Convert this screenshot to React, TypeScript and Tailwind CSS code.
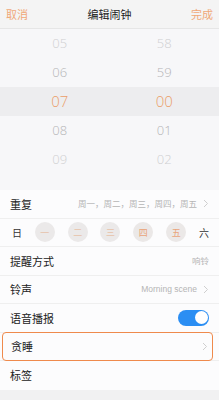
import React from 'react';

const font = { fontFamily: '"Noto Sans CJK SC", "Noto Sans", sans-serif' };
const numFont = { fontFamily: '"Open Sans", "Noto Sans", sans-serif' };

const hours = ['05', '06', '07', '08', '09'];
const minutes = ['58', '59', '00', '01', '02'];

const Chevron = () => (
  <svg width="6" height="9" viewBox="0 0 6 9" className="ml-[6px] shrink-0">
    <path d="M1 1 L4.5 4.5 L1 8" fill="none" stroke="#cfcfcf" strokeWidth="1" />
  </svg>
);

const numColor = (i: number) =>
  i === 2
    ? 'text-[#eb9d68] text-[15px]'
    : i === 1 || i === 3
      ? 'text-[#b4b4b6] text-[13px]'
      : 'text-[#cfcfd1] text-[13px]';

const Row = ({ label, children, border = true }: { label: string; children?: React.ReactNode; border?: boolean }) => (
  <div className={`h-[28.5px] flex items-center px-[10px] ${border ? 'border-b border-[#efefef]' : ''}`}>
    <span className="text-[11px] text-[#222]">{label}</span>
    <div className="ml-auto flex items-center">{children}</div>
  </div>
);

export default function App() {
  const days = ['一', '二', '三', '四', '五'];
  return (
    <div className="w-[219px] h-[400px] bg-[#f1f1f2] flex flex-col overflow-hidden" style={font}>
      {/* header */}
      <div className="h-[29px] shrink-0 flex items-center justify-between px-[6px] bg-[#f4f4f4] border-b border-[#e6e6e6]">
        <span className="text-[11px] text-[#f0a878]">取消</span>
        <span className="text-[11px] text-[#222]">编辑闹钟</span>
        <span className="text-[11px] text-[#f0a878]">完成</span>
      </div>

      {/* picker */}
      <div className="h-[161px] shrink-0 bg-[#f7f7f9] flex flex-col" style={numFont}>
        {hours.map((h, i) => (
          <div
            key={h}
            className={`h-[29px] grid grid-cols-2 items-center font-light ${i === 2 ? 'bg-[#ededef]' : ''}`}
          >
            <span className={`pl-[10px] text-center ${numColor(i)}`}>{h}</span>
            <span className={`text-center ${numColor(i)}`}>{minutes[i]}</span>
          </div>
        ))}
      </div>

      {/* list */}
      <div className="bg-[#fcfcfd] flex flex-col">
        <Row label="重复">
          <span className="text-[8.5px] text-[#b5b5b5]">周一，周二，周三，周四，周五</span>
          <Chevron />
        </Row>
        <div className="h-[28.5px] flex items-center justify-between pl-[12px] pr-[10px] border-b border-[#efefef]">
          <span className="w-[10px] text-[10px] text-[#333]">日</span>
          {days.map((d, i) => (
            <span
              key={d}
              className={`w-[20px] h-[20px] rounded-full flex items-center justify-center text-[9px] ${
                i >= 3 ? 'bg-[#ebe8e7] text-[#e9a47a]' : 'bg-[#ebe9e9] text-[#e7c2aa]'
              }`}
            >
              {d}
            </span>
          ))}
          <span className="w-[10px] text-[10px] text-[#333]">六</span>
        </div>
        <Row label="提醒方式">
          <span className="text-[8.5px] text-[#b5b5b5]">响铃</span>
        </Row>
        <Row label="铃声">
          <span className="text-[8.5px] text-[#b5b5b5]" style={{ fontFamily: '"Liberation Sans", sans-serif' }}>
            Morning scene
          </span>
          <Chevron />
        </Row>
        <Row label="语音播报">
          <div className="w-[31px] h-[16px] rounded-full bg-[#2b8ef3] flex items-center justify-end px-[1.5px]">
            <span className="w-[13px] h-[13px] rounded-full bg-white" />
          </div>
        </Row>
        <div className="h-[28.5px] flex items-center px-[2px] border-b border-[#efefef]">
          <div className="flex-1 h-[29px] flex items-center pl-[8px] pr-[4px] border-[1.5px] border-[#ef8a4c] rounded-[4px] mr-[4px]">
            <span className="text-[11px] text-[#222]">贪睡</span>
            <div className="ml-auto">
              <Chevron />
            </div>
          </div>
        </div>
        <Row label="标签" border={false} />
      </div>
      <div className="flex-1 bg-[#f1f1f2]" />
    </div>
  );
}
